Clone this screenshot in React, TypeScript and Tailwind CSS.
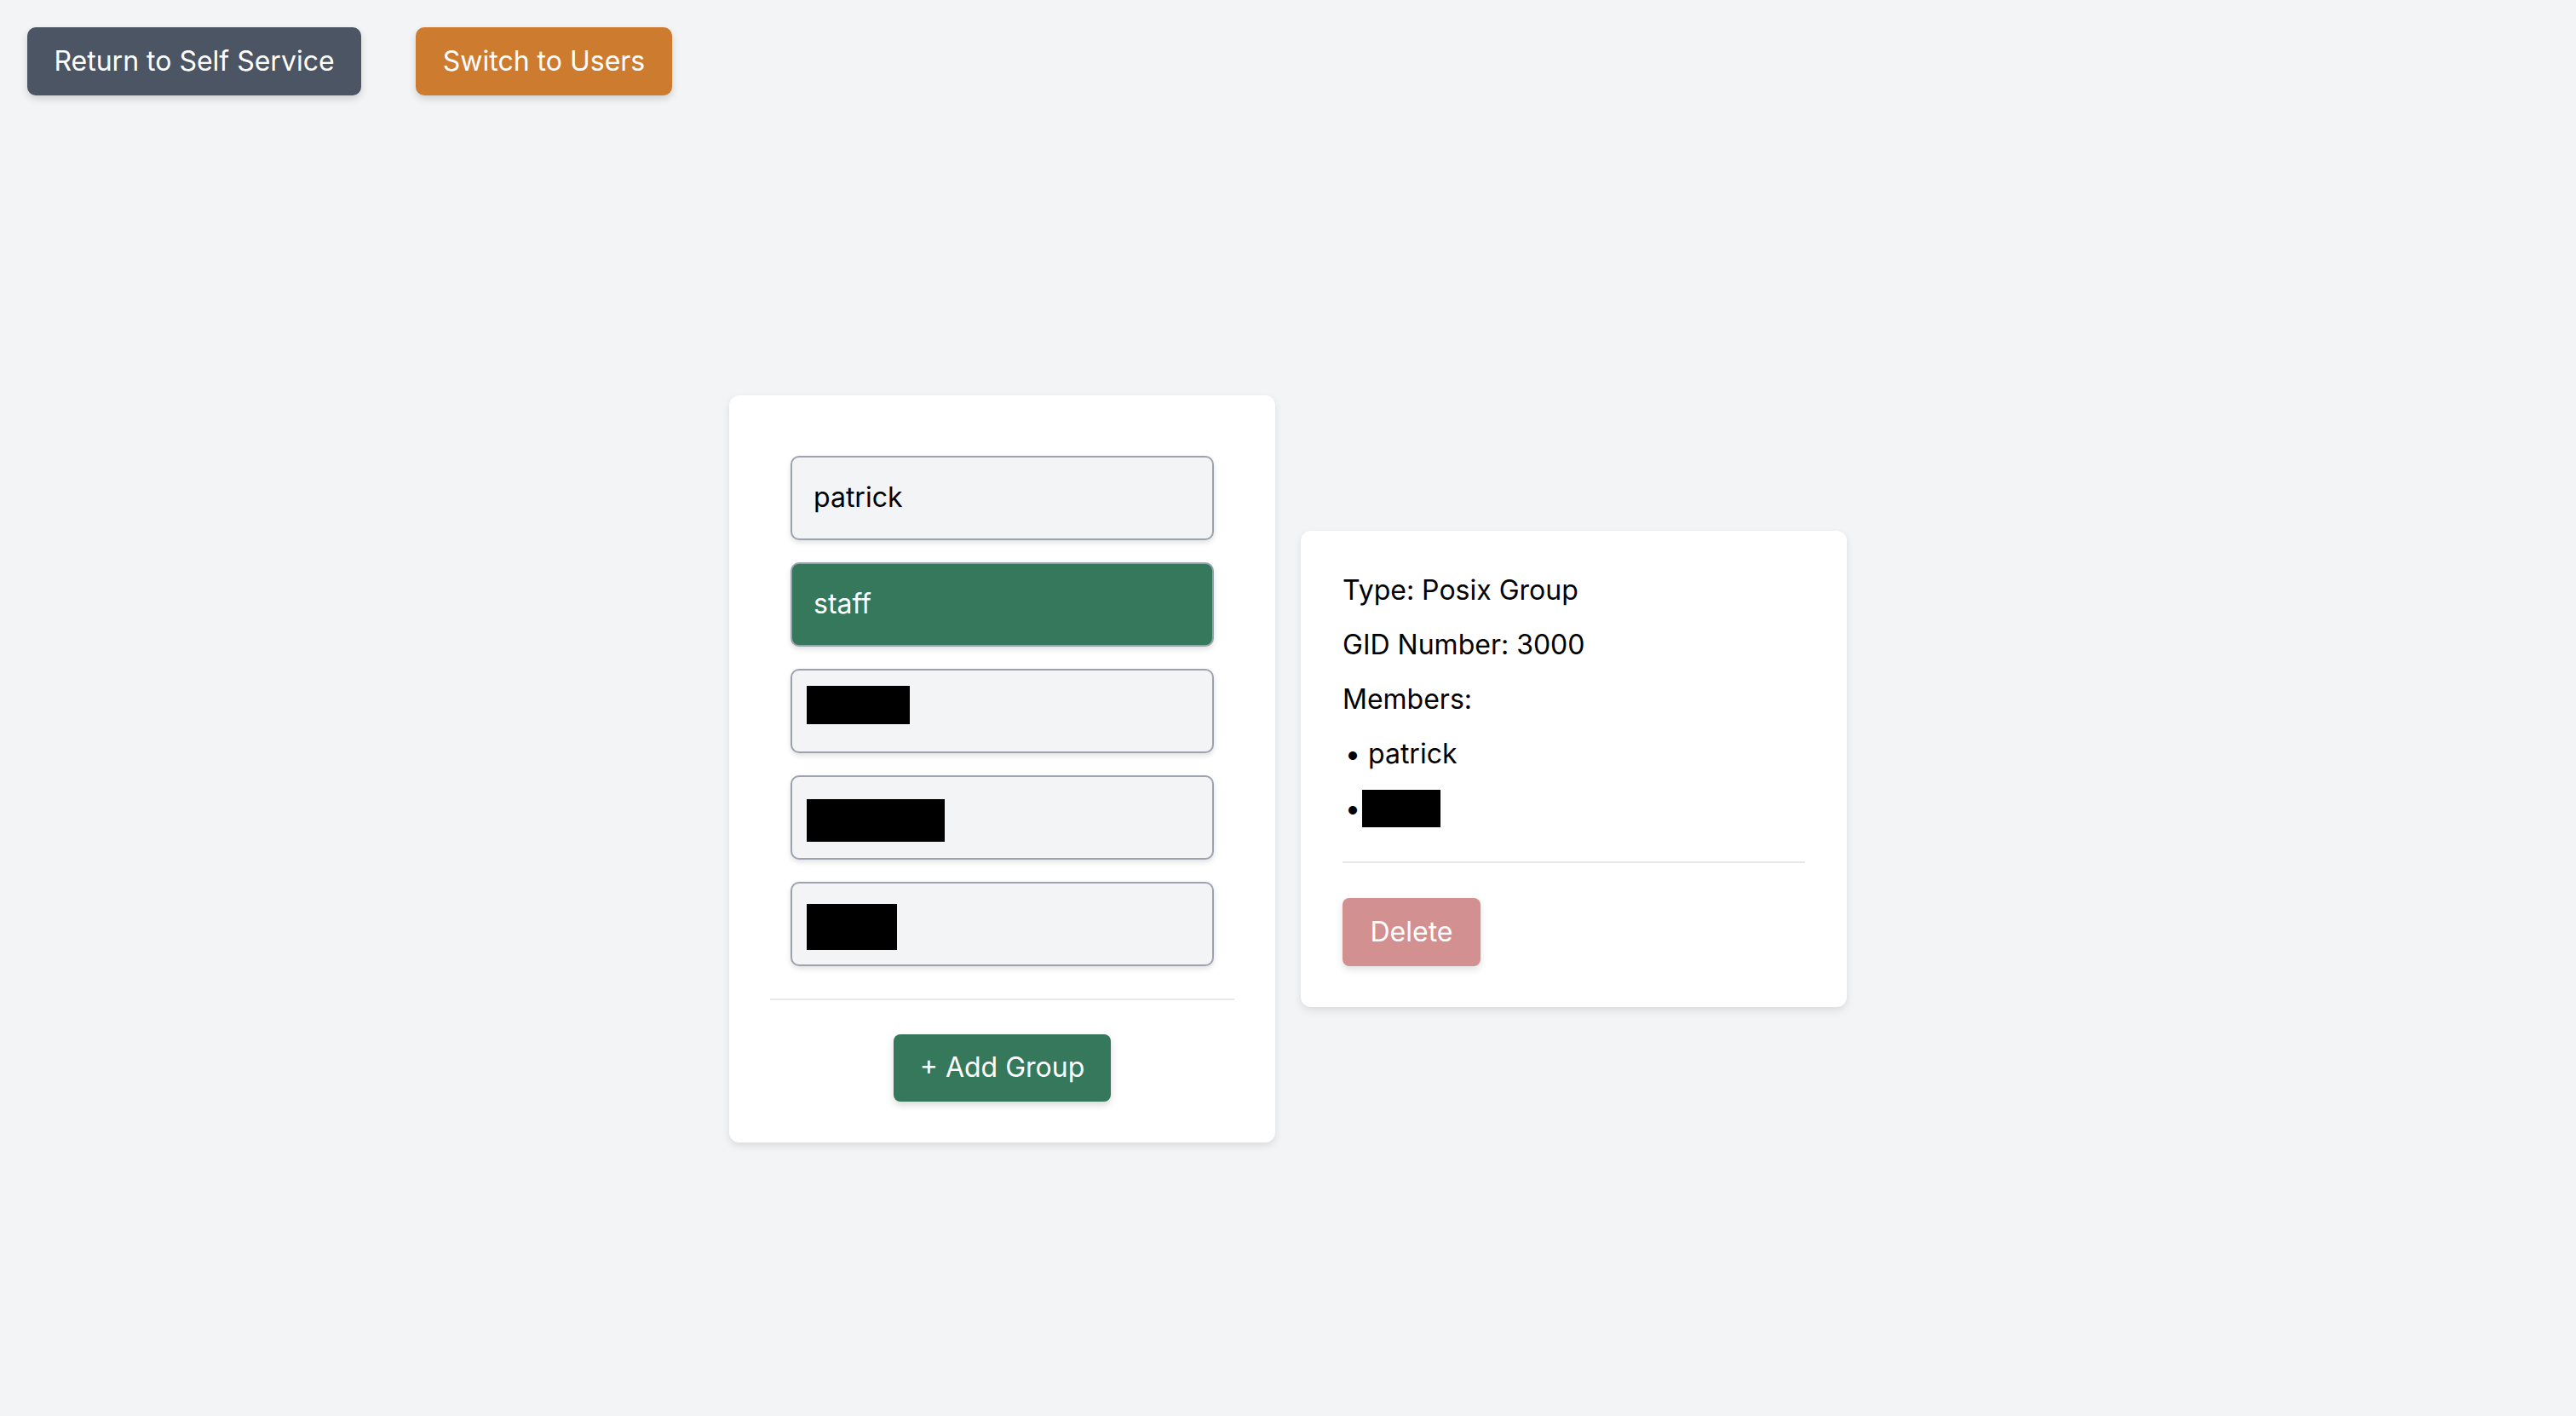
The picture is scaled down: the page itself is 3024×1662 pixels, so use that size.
import React from "react";

const Item = ({ children, active = false }: { children: React.ReactNode; active?: boolean }) => (
  <div
    className={`h-[99px] rounded-[10px] border-2 border-[#9ca3af] flex items-center shadow-[0_3px_6px_rgba(0,0,0,0.12)] ${
      active ? "bg-[#35785c] text-white pl-[25px]" : "bg-[#f3f4f6] text-black pl-[25px]"
    }`}
  >
    {children}
  </div>
);

const Box = ({ w, h }: { w: number; h: number }) => (
  <span className="bg-black inline-block" style={{ width: w, height: h }} />
);

export default function App() {
  return (
    <div
      className="min-h-[1662px] bg-[#f3f4f6] flex flex-col text-[32px] leading-[48px]"
      style={{ fontFamily: "Inter, 'Noto Sans', sans-serif" }}
    >
      <div className="flex gap-[64px] pl-[32px] pt-[32px] h-[144px]">
        <button className="h-[80px] w-[392px] rounded-[10px] bg-[#4b5563] text-white shadow-[0_4px_8px_rgba(0,0,0,0.15)]">
          Return to Self Service
        </button>
        <button className="h-[80px] w-[301px] rounded-[10px] bg-[#cd7c2f] text-white shadow-[0_4px_8px_rgba(0,0,0,0.15)]">
          Switch to Users
        </button>
      </div>
      <div className="flex-1 flex items-center justify-center gap-[30px] pb-[2px]">
        <div className="w-[641px] bg-white rounded-[12px] shadow-[0_4px_10px_rgba(0,0,0,0.1)] p-[48px]">
          <div className="px-[24px] pt-[23px] flex flex-col gap-[26px]">
            <Item>patrick</Item>
            <Item active>staff</Item>
            <Item><span className="-ml-[8px]"><Box w={121} h={45} /></span></Item>
            <Item><span className="-ml-[8px] mt-[20px]"><Box w={162} h={50} /></span></Item>
            <Item><span className="-ml-[8px] mt-[20px]"><Box w={106} h={54} /></span></Item>
          </div>
          <div className="h-[2px] bg-[#e5e7eb] mt-[38px]" />
          <div className="flex justify-center mt-[40px]">
            <button className="h-[79px] w-[255px] rounded-[8px] bg-[#35785c] text-white shadow-[0_4px_8px_rgba(0,0,0,0.15)]">
              + Add Group
            </button>
          </div>
        </div>
        <div className="w-[641px] bg-white rounded-[12px] shadow-[0_4px_10px_rgba(0,0,0,0.1)] px-[49px] pt-[46px] pb-[48px] text-black">
          <div className="flex flex-col gap-[16px]">
            <div>Type: Posix Group</div>
            <div>GID Number: 3000</div>
            <div>Members:</div>
            <div className="flex items-center"><span className="w-[30px] pl-[3px]">•</span>patrick</div>
            <div className="flex items-center"><span className="w-[23px] pl-[3px]">•</span><Box w={92} h={44} /></div>
          </div>
          <div className="h-[2px] bg-[#e5e7eb] mt-[38px]" />
          <button className="mt-[41px] h-[80px] w-[162px] rounded-[8px] bg-[#d39090] text-white shadow-[0_4px_8px_rgba(0,0,0,0.12)]">
            Delete
          </button>
        </div>
      </div>
    </div>
  );
}
